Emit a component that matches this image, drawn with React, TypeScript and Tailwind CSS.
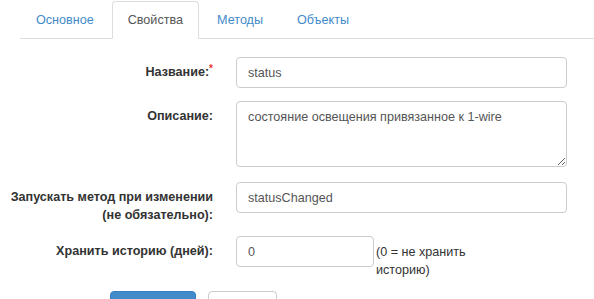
import React from "react";

export default function App() {
  const font = { fontFamily: '"Liberation Sans", Arial, sans-serif' };
  return (
    <div className="w-[594px] bg-white text-[12.6px] leading-[18px] text-[#333]" style={font}>
      <div className="pt-px pl-[20px]">
        <ul className="flex border-b border-[#ddd]">
          <li className="-mb-px mr-[2px]">
            <a className="block border border-transparent px-[15px] py-[9px] text-[#428bca] rounded-t-[4px]">Основное</a>
          </li>
          <li className="-mb-px mr-[2px]">
            <a className="block border border-[#ddd] border-b-transparent bg-white px-[15px] py-[9px] text-[#555] rounded-t-[4px]">Свойства</a>
          </li>
          <li className="-mb-px mr-[2px]">
            <a className="block border border-transparent px-[15px] py-[9px] text-[#428bca] rounded-t-[4px]">Методы</a>
          </li>
          <li className="-mb-px mr-[2px]">
            <a className="block border border-transparent px-[15px] py-[9px] text-[#428bca] rounded-t-[4px]">Объекты</a>
          </li>
        </ul>
      </div>

      <form className="mt-[18px]">
        <div className="mb-[13px] flex items-start gap-[23px]">
          <label className="w-[213px] shrink-0 pt-[6px] text-right font-bold">
            Название:<span className="relative -top-[4px] text-[10px] text-[#ee3333]">*</span>
          </label>
          <input
            readOnly
            value="status"
            className="h-[31px] w-[331px] rounded-[4px] border border-[#ccc] px-[11px] text-[#555] outline-none"
          />
        </div>

        <div className="mb-[15px] flex items-start gap-[23px]">
          <label className="w-[213px] shrink-0 pt-[6px] text-right font-bold">Описание:</label>
          <textarea
            readOnly
            value="состояние освещения привязанное к 1-wire"
            className="block h-[66px] w-[331px] rounded-[4px] border border-[#ccc] px-[11px] py-[6px] text-[#555] outline-none"
          />
        </div>

        <div className="mb-[12px] flex items-start gap-[23px]">
          <label className="w-[213px] shrink-0 pt-[6px] text-right font-bold">
            Запускать метод при изменении
            <br />
            (не обязательно):
          </label>
          <input
            readOnly
            value="statusChanged"
            className="h-[31px] w-[331px] rounded-[4px] border border-[#ccc] px-[11px] text-[#555] outline-none"
          />
        </div>

        <div className="mb-[12px] flex items-start gap-[23px]">
          <label className="w-[213px] shrink-0 pt-[6px] text-right font-bold">Хранить историю (дней):</label>
          <div className="flex items-start gap-[2px]">
            <input
              readOnly
              value="0"
              className="h-[31px] w-[138px] rounded-[4px] border border-[#ccc] px-[11px] text-[#555] outline-none"
            />
            <span className="w-[110px] pt-[7px] text-[#333]">(0 = не хранить историю)</span>
          </div>
        </div>

        <div className="flex gap-[12px] pl-[110px]">
          <button
            type="button"
            className="h-[31px] w-[86px] rounded-[4px] border border-[#357ebd] bg-[#428bca] text-white"
          >
            Сохранить
          </button>
          <button
            type="button"
            className="h-[31px] w-[69px] rounded-[4px] border border-[#ccc] bg-white text-[#333]"
          >
            Отмена
          </button>
        </div>
      </form>
    </div>
  );
}
